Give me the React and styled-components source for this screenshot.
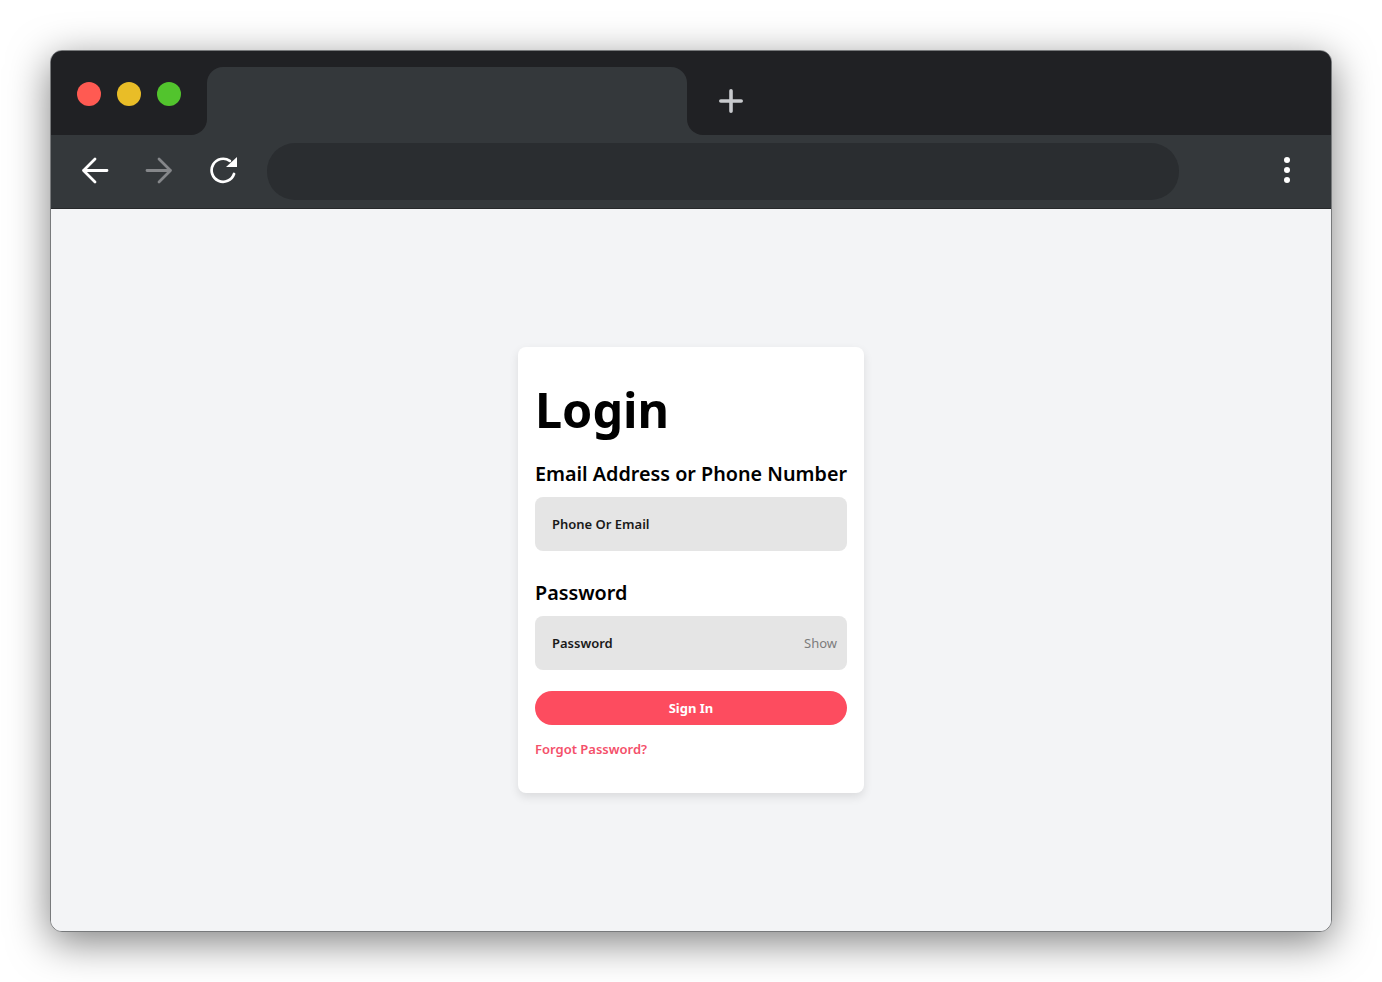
import styled, { createGlobalStyle } from 'styled-components'

const GlobalStyle = createGlobalStyle`
  html, body { margin: 0; background: #fff; }
  * { box-sizing: border-box; }
  body { font-family: "Noto Sans", "Open Sans", sans-serif; }
`

const Page = styled.div`
  padding: 50px;
  height: 982px;
  overflow: hidden;
`

const BrowserWindow = styled.div`
  display: flex;
  flex-direction: column;
  height: 882px;
  border: 1px solid #77797b;
  border-radius: 12px;
  overflow: hidden;
  background: #f3f4f6;
  box-shadow: 0 10px 40px rgba(0, 0, 0, 0.5);
`

const TabStrip = styled.div`
  display: flex;
  height: 84px;
  flex: none;
  background: #34383b;
`

const Lights = styled.div`
  display: flex;
  gap: 16px;
  width: 156px;
  padding: 31px 0 0 26px;
  background: #202124;
  border-bottom-right-radius: 16px;
`

const Light = styled.span`
  width: 24px;
  height: 24px;
  border-radius: 50%;
  background: ${p => p.$color};
`

const TabSlot = styled.div`
  width: 480px;
  padding-top: 16px;
  background: #202124;
`

const Tab = styled.div`
  height: 100%;
  background: #34383b;
  border-radius: 16px 16px 0 0;
`

const StripRest = styled.div`
  flex: 1;
  padding: 38px 0 0 32px;
  background: #202124;
  border-bottom-left-radius: 16px;
`

const Icon = styled.svg`
  display: block;
  flex: none;
`

const Toolbar = styled.div`
  display: flex;
  align-items: center;
  height: 74px;
  flex: none;
  padding: 0 41px 3px 30px;
  background: #34383b;
  border-bottom: 1px solid #26282a;
`

const NavGroup = styled.div`
  display: flex;
  align-items: center;
  gap: 36px;
  width: 186px;
`

const AddressBar = styled.div`
  width: 912px;
  height: 57px;
  margin-top: 2px;
  border-radius: 28px;
  background: #2a2d30;
`

const Kebab = styled.div`
  display: flex;
  flex-direction: column;
  gap: 4px;
  margin-left: auto;
`

const Dot = styled.span`
  width: 6px;
  height: 6px;
  border-radius: 50%;
  background: #fff;
`

const Content = styled.main`
  flex: 1;
  display: flex;
  align-items: center;
  justify-content: center;
  background: #f3f4f6;
`

const Card = styled.form`
  width: 346px;
  height: 446px;
  padding: 25px 17px 0;
  background: #fff;
  border-radius: 8px;
  box-shadow: 0 4px 10px rgba(0, 0, 0, 0.1);
`

const Title = styled.h1`
  margin: 0 0 13px 0;
  font-size: 48.5px;
  line-height: 74px;
  font-weight: 700;
  color: #000;
`

const Label = styled.label`
  display: block;
  margin-bottom: 8px;
  font-size: 19.75px;
  line-height: 30px;
  font-weight: 600;
  color: #000;
  white-space: nowrap;
`

const InputBox = styled.div`
  display: flex;
  align-items: center;
  height: 54px;
  padding: 0 10px 0 17px;
  margin-bottom: ${p => p.$gap}px;
  background: #e5e5e5;
  border-radius: 8px;
`

const Input = styled.input`
  flex: 1;
  min-width: 0;
  padding: 0;
  border: 0;
  outline: 0;
  background: transparent;
  font: 600 13px "Noto Sans", sans-serif;
  color: #1a1a1a;
  &::placeholder { color: #1a1a1a; opacity: 1; }
`

const ShowText = styled.span`
  font-size: 13px;
  color: #7c7c7c;
`

const SignIn = styled.button`
  display: block;
  width: 100%;
  height: 34px;
  padding: 0;
  border: 0;
  border-radius: 17px;
  background: #fd4c5f;
  color: #fff;
  font: 700 13px "Noto Sans", sans-serif;
`

const Forgot = styled.a`
  display: block;
  margin-top: 14px;
  font-size: 13px;
  line-height: 20px;
  font-weight: 600;
  color: #f4506a;
`

function Arrow({ flip, color }) {
  return (
    <Icon width="28" height="28" viewBox="0 0 28 28" fill="none" stroke={color} strokeWidth="2.8" strokeLinecap="round" strokeLinejoin="round" style={flip ? { transform: 'scaleX(-1)' } : undefined}>
      <path d="M26 14.5H2.5M14 3L2.5 14.5L14 26" />
    </Icon>
  )
}

function Reload() {
  return (
    <Icon width="28" height="28" viewBox="0 0 28 28" fill="none">
      <path d="M20.8 4.9A11.5 11.5 0 1 0 25 18" stroke="#fff" strokeWidth="2.7" strokeLinecap="round" />
      <path d="M28 1v10H17z" fill="#fff" />
    </Icon>
  )
}

function Plus() {
  return (
    <Icon width="24" height="24" viewBox="0 0 24 24" fill="none" stroke="#c8cacd" strokeWidth="3.6" strokeLinecap="round">
      <path d="M12 1.8v20.4M1.8 12h20.4" />
    </Icon>
  )
}

export default function App() {
  return (
    <Page>
      <GlobalStyle />
      <BrowserWindow>
        <TabStrip>
          <Lights>
            <Light $color="#ff5a52" />
            <Light $color="#e9bd27" />
            <Light $color="#52c42d" />
          </Lights>
          <TabSlot><Tab /></TabSlot>
          <StripRest><Plus /></StripRest>
        </TabStrip>
        <Toolbar>
          <NavGroup>
            <Arrow color="#fff" />
            <Arrow flip color="#85878a" />
            <Reload />
          </NavGroup>
          <AddressBar />
          <Kebab><Dot /><Dot /><Dot /></Kebab>
        </Toolbar>
        <Content>
          <Card>
            <Title>Login</Title>
            <Label htmlFor="user">Email Address or Phone Number</Label>
            <InputBox $gap={27}>
              <Input id="user" placeholder="Phone Or Email" />
            </InputBox>
            <Label htmlFor="pass">Password</Label>
            <InputBox $gap={21}>
              <Input id="pass" placeholder="Password" />
              <ShowText>Show</ShowText>
            </InputBox>
            <SignIn type="button">Sign In</SignIn>
            <Forgot>Forgot Password?</Forgot>
          </Card>
        </Content>
      </BrowserWindow>
    </Page>
  )
}
